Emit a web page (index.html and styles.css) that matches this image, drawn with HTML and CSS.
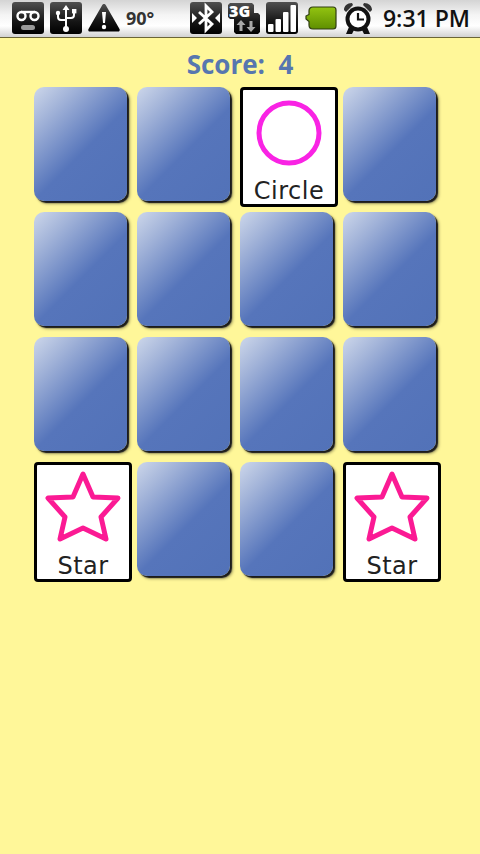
FILE: index.html
```html
<!DOCTYPE html>
<html lang="en">
<head>
    <meta charset="UTF-8">
    <meta name="viewport" content="width=device-width, initial-scale=1.0">
    <title>Memory Game</title>
    <link rel="stylesheet" href="styles.css">
</head>
<body>
    <svg class="defs" width="0" height="0">
        <defs>
            <linearGradient id="tile" x1="0" y1="0" x2="0" y2="1">
                <stop offset="0" stop-color="#505050"/>
                <stop offset="0.6" stop-color="#161616"/>
                <stop offset="1" stop-color="#000"/>
            </linearGradient>
            <linearGradient id="charge" x1="0" y1="0" x2="0" y2="1">
                <stop offset="0" stop-color="#93c411"/>
                <stop offset="1" stop-color="#5f8f00"/>
            </linearGradient>
        </defs>
    </svg>

    <div class="status-bar">
        <div class="status-left">
            <svg class="icon" width="32" height="32" viewBox="0 0 32 32">
                <rect width="32" height="32" rx="3" fill="url(#tile)"/>
                <circle cx="9.500" cy="14" r="4" fill="none" stroke="#fff" stroke-width="2.400"/>
                <circle cx="22.500" cy="14" r="4" fill="none" stroke="#fff" stroke-width="2.400"/>
                <rect x="9" y="8.800" width="14" height="2.400" fill="#fff"/>
                <rect x="9" y="23" width="14" height="5" rx="2.500" fill="#999"/>
            </svg>
            <svg class="icon" width="32" height="32" viewBox="0 0 32 32">
                <rect width="32" height="32" rx="3" fill="url(#tile)"/>
                <path d="M16 3l-3.500 5h2.500v17h2V8h2.500z" fill="#fff"/>
                <circle cx="16" cy="27" r="3" fill="#fff"/>
                <path d="M8 12v3c0 2 1 3 3 3h5M24 11v2c0 2-1 3-3 3h-5" fill="none" stroke="#fff" stroke-width="2"/>
                <circle cx="8" cy="11" r="2.200" fill="#fff"/>
                <rect x="22" y="7" width="4.400" height="4.400" fill="#fff"/>
            </svg>
            <svg class="icon" width="32" height="28" viewBox="0 0 32 28">
                <path d="M16 0c1 0 1.500.5 2 1.500L31.500 25c.6 1.200 0 2.500-1 2.500H1.500c-1 0-1.600-1.300-1-2.500L14 1.500C14.500.5 15 0 16 0z" fill="url(#tile)"/>
                <path d="M14 8h4l-1 11h-2z" fill="#fff"/>
                <circle cx="16" cy="23" r="2.200" fill="#fff"/>
            </svg>
            <span class="temp">90°</span>
        </div>
        <div class="status-right">
            <svg class="icon" width="32" height="32" viewBox="0 0 32 32">
                <rect width="32" height="32" rx="3" fill="url(#tile)"/>
                <path d="M9 10l13 12-6 6V4l6 6L9 22" fill="none" stroke="#fff" stroke-width="2.800"/>
                <path d="M2 11l5 5-5 5zM30 11l-5 5 5 5z" fill="#fff"/>
            </svg>
            <svg class="icon net-icon" width="32" height="32" viewBox="0 0 32 32">
                <path d="M2 1h22l2 2v8h4l2 2v17l-2 2H8l-2-2V17H2l-2-2V3z" fill="url(#tile)"/>
                <text class="net" x="1" y="15">3G</text>
                <path d="M13 18l-4.500 5h3v6h3v-6h3zM23 30l-4.500-5h3v-6h3v6h3z" fill="#a8a8a8"/>
            </svg>
            <svg class="icon" width="32" height="32" viewBox="0 0 32 32">
                <rect width="32" height="32" rx="3" fill="url(#tile)"/>
                <rect x="2" y="22" width="5.500" height="8" rx="1" fill="#fff"/>
                <rect x="9.500" y="17" width="5.500" height="13" rx="1" fill="#fff"/>
                <rect x="17" y="10" width="5.500" height="20" rx="1" fill="#fff"/>
                <rect x="24.500" y="3" width="5.500" height="27" rx="1" fill="#fff"/>
            </svg>
            <svg class="icon battery" width="32" height="24" viewBox="0 0 32 24">
                <path d="M1 10l3-1.500V5c0-2.500 1.500-4 4-4h20c2 0 3 1 3 3v16c0 2-1 3-3 3H8c-2.500 0-4-1.500-4-4v-3.500L1 13z" fill="url(#charge)" stroke="#2f3d12" stroke-width="1.200"/>
            </svg>
            <svg class="icon" width="30" height="32" viewBox="0 0 30 32">
                <path d="M1 8c0-4 3-7 8-7l1 2-7 7zM29 8c0-4-3-7-8-7l-1 2 7 7z" fill="#333"/>
                <circle cx="15" cy="17" r="12.500" fill="#111"/>
                <circle cx="15" cy="17" r="8.500" fill="#fff"/>
                <path d="M15 11v6.500h6" fill="none" stroke="#111" stroke-width="2.200"/>
                <path d="M6 25l-3 7h6l2-4zM24 25l3 7h-6l-2-4z" fill="#111"/>
            </svg>
            <span class="clock">9:31 PM</span>
        </div>
    </div>

    <div class="score">Score:&nbsp; 4</div>

    <div class="board">
        <div class="card"></div>
        <div class="card"></div>
        <div class="card open">
            <svg class="shape" width="92" height="88" viewBox="0 0 92 88">
                <circle cx="46" cy="43" r="30" fill="none" stroke="#f923e4" stroke-width="5"/>
            </svg>
            <span class="label">Circle</span>
        </div>
        <div class="card"></div>

        <div class="card"></div>
        <div class="card"></div>
        <div class="card"></div>
        <div class="card"></div>

        <div class="card"></div>
        <div class="card"></div>
        <div class="card"></div>
        <div class="card"></div>

        <div class="card open">
            <svg class="shape" width="92" height="88" viewBox="0 0 92 88">
                <path d="M46 9L56 32L81 33L64 52L69 74L46 63L23 74L28 52L11 33L36 32Z" fill="none" stroke="#fb1a94" stroke-width="5" stroke-linejoin="round"/>
            </svg>
            <span class="label">Star</span>
        </div>
        <div class="card"></div>
        <div class="card"></div>
        <div class="card open">
            <svg class="shape" width="92" height="88" viewBox="0 0 92 88">
                <path d="M46 9L56 32L81 33L64 52L69 74L46 63L23 74L28 52L11 33L36 32Z" fill="none" stroke="#fb1a94" stroke-width="5" stroke-linejoin="round"/>
            </svg>
            <span class="label">Star</span>
        </div>
    </div>
</body>
</html>
```

FILE: styles.css
```css
body {
    font-family: 'Open Sans', sans-serif;
    background-color: #fff799;
    margin: 0;
    padding: 0;
    width: 480px;
    height: 854px;
    overflow: hidden;
}
.status-bar {
    display: flex;
    justify-content: space-between;
    align-items: center;
    height: 38px;
    box-sizing: border-box;
    padding: 0 10px 1px 12px;
    background: linear-gradient(#d4d4d4, #f4f4f4 40%, #ffffff 70%, #d2d2d2);
    border-bottom: 1px solid #6b6536;
}
.status-left, .status-right {
    display: flex;
    align-items: center;
    gap: 6px;
}
.icon {
    display: block;
    flex-shrink: 0;
}
.net-icon {
    overflow: visible;
}
.net {
    font-family: 'Open Sans', sans-serif;
    font-size: 16px;
    font-weight: 800;
    fill: #ffffff;
}
.battery {
    margin-left: 1px;
}
.temp {
    font-size: 18px;
    font-weight: 700;
    color: #333333;
}
.clock {
    font-size: 23px;
    font-weight: 600;
    color: #111111;
    margin-left: 4px;
}
.defs {
    position: absolute;
}
.score {
    height: 49px;
    line-height: 53px;
    text-align: center;
    font-size: 26px;
    font-weight: 700;
    color: #5776af;
}
.board {
    display: grid;
    grid-template-columns: repeat(4, 98px);
    grid-auto-rows: 120px;
    gap: 5px;
    padding-left: 34px;
}
.card {
    width: 93px;
    height: 114px;
    border-radius: 10px;
    background: linear-gradient(135deg, #cdd7ea 0%, #a3b4d9 20%, #5675bb 55%, #5272b8 100%);
    box-shadow: 2px 2px 1px #1c1c1c, 3px 3px 3px rgba(0, 0, 0, 0.35);
}
.card.open {
    display: flex;
    flex-direction: column;
    align-items: center;
    box-sizing: border-box;
    width: 98px;
    height: 120px;
    border: 3px solid #000000;
    border-radius: 4px;
    background: #ffffff;
    box-shadow: none;
}
.shape {
    display: block;
}
.label {
    font-family: 'DejaVu Sans', sans-serif;
    font-size: 24px;
    line-height: 26px;
    letter-spacing: 0.5px;
    color: #222222;
}
```
